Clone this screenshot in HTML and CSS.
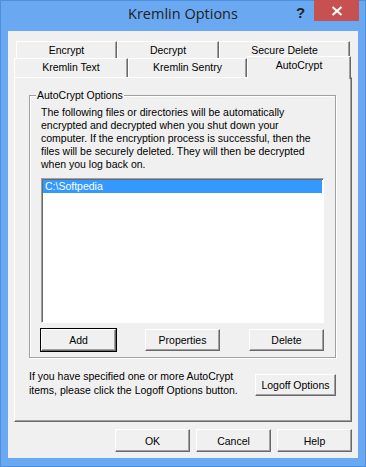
FILE: index.html
```html
<!DOCTYPE html>
<html lang="en">
<head>
    <meta charset="UTF-8">
    <title>Kremlin Options</title>
    <link rel="stylesheet" href="styles.css">
</head>
<body>
    <div class="window">
        <div class="titlebar">
            <span class="title">Kremlin Options</span>
            <span class="help-q">?</span>
            <span class="close-btn">
                <svg width="12" height="10" viewBox="0 0 12 10"><path d="M1.5 1 L10.5 9 M10.5 1 L1.5 9" stroke="#fff" stroke-width="2"/></svg>
            </span>
        </div>
        <div class="client">
            <div class="tabs">
                <div class="tab-row back">
                    <div class="tab w-encrypt">Encrypt</div>
                    <div class="tab w-decrypt">Decrypt</div>
                    <div class="tab w-secure">Secure Delete</div>
                </div>
                <div class="tab-row front">
                    <div class="tab w-ktext">Kremlin Text</div>
                    <div class="tab w-sentry">Kremlin Sentry</div>
                    <div class="tab w-auto active">AutoCrypt</div>
                </div>
            </div>
            <div class="panel">
                <fieldset class="group">
                    <legend>AutoCrypt Options</legend>
                    <p class="desc">The following files or directories will be automatically encrypted and decrypted when you shut down your computer. If the encryption process is successful, then the files will be securely deleted. They will then be decrypted when you log back on.</p>
                    <div class="listbox">
                        <div class="list-item selected">C:\Softpedia</div>
                    </div>
                    <div class="group-buttons">
                        <button class="btn default">Add</button>
                        <button class="btn">Properties</button>
                        <button class="btn">Delete</button>
                    </div>
                </fieldset>
                <div class="logoff-row">
                    <p class="logoff-text">If you have specified one or more AutoCrypt items, please click the Logoff Options button.</p>
                    <button class="btn logoff-btn">Logoff Options</button>
                </div>
            </div>
            <div class="dialog-buttons">
                <button class="btn">OK</button>
                <button class="btn">Cancel</button>
                <button class="btn">Help</button>
            </div>
        </div>
    </div>
</body>
</html>
```
FILE: styles.css
```css
:root {
    --frame-blue: #6aa9f1;
    --face: #f0f0f0;
    --shadow: #a0a0a0;
    --dark-shadow: #696969;
}
body {
    margin: 0;
    background-color: var(--frame-blue);
    font-family: "Liberation Sans", Arial, sans-serif;
    font-size: 10.5px;
    color: #000;
}
.window {
    width: 366px;
    height: 467px;
    box-sizing: border-box;
    border: 1px solid #4d8fdc;
    display: flex;
    flex-direction: column;
}
.titlebar {
    position: relative;
    height: 30px;
    flex-shrink: 0;
}
.title {
    position: absolute;
    left: 0;
    right: 0;
    top: 3px;
    text-align: center;
    font-family: "Open Sans", "Noto Sans", sans-serif;
    font-size: 14.5px;
    color: #222;
}
.help-q {
    position: absolute;
    left: 295px;
    top: 3px;
    font-family: "Liberation Sans", Arial, sans-serif;
    font-weight: bold;
    font-size: 15px;
    color: #222;
}
.close-btn {
    position: absolute;
    left: 313px;
    top: -1px;
    width: 45px;
    height: 21px;
    background-color: #c75050;
    display: flex;
    align-items: center;
    justify-content: center;
}
.client {
    margin: 0 7px 8px 7px;
    flex: 1;
    background-color: var(--face);
    padding: 10px 6px 0 6px;
    display: flex;
    flex-direction: column;
}
.tabs {
    display: flex;
    flex-direction: column;
    height: 36px;
}
.tab-row {
    display: flex;
}
.tab-row.back {
    height: 17px;
    padding-left: 2px;
}
.tab-row.front {
    height: 19px;
}
.tab {
    box-sizing: border-box;
    border-top: 1px solid #fff;
    border-left: 1px solid #fff;
    border-right: 1px solid var(--dark-shadow);
    box-shadow: inset -1px 0 var(--shadow);
    text-align: center;
    line-height: 16px;
    height: 100%;
}
.w-encrypt { width: 101px; }
.w-decrypt { width: 102px; }
.w-secure { width: 131px; }
.w-ktext { width: 114px; }
.w-sentry { width: 119px; }
.w-auto { width: 104px; }
.tab.active {
    height: 23px;
    margin-top: -2px;
    position: relative;
    z-index: 1;
    background-color: var(--face);
    line-height: 17px;
}
.panel {
    height: 345px;
    box-sizing: border-box;
    border-top: 1px solid #fff;
    border-left: 1px solid #fff;
    border-right: 1px solid var(--dark-shadow);
    border-bottom: 1px solid var(--dark-shadow);
    box-shadow: inset -1px -1px var(--shadow);
    padding: 17px 0 0 14px;
}
.group {
    margin: 0;
    width: 307px;
    height: 263px;
    box-sizing: border-box;
    border: 1px solid var(--shadow);
    box-shadow: 1px 1px 0 #fff, inset 1px 1px 0 #fff;
    padding: 4px 11px 0 11px;
    position: relative;
}
.group legend {
    position: absolute;
    top: -7px;
    left: 6px;
    padding: 0 1px;
    background-color: var(--face);
    line-height: 13px;
}
.desc {
    margin: 6px 0 0 0;
    line-height: 13px;
    height: 66px;
}
.listbox {
    margin-top: 6px;
    height: 145px;
    box-sizing: border-box;
    background-color: #fff;
    border: 1px solid;
    border-color: var(--shadow) #fff #fff var(--shadow);
    box-shadow: inset 1px 1px var(--dark-shadow);
    padding: 1px 1px 0 1px;
}
.list-item {
    height: 13px;
    line-height: 13px;
    padding-left: 2px;
}
.list-item.selected {
    background-color: #3399ff;
    color: #fff;
}
.group-buttons {
    display: flex;
    justify-content: space-between;
    margin-top: 6px;
}
.btn {
    width: 75px;
    height: 22px;
    box-sizing: border-box;
    background-color: var(--face);
    font-family: "Liberation Sans", Arial, sans-serif;
    font-size: 10.5px;
    color: #000;
    border: 1px solid;
    border-color: #fff var(--dark-shadow) var(--dark-shadow) #fff;
    box-shadow: inset -1px -1px var(--shadow);
    padding: 0;
}
.btn.default {
    outline: 1px solid #000;
}
.logoff-row {
    display: flex;
    align-items: center;
    justify-content: space-between;
    width: 307px;
    margin-top: 14px;
}
.logoff-text {
    margin: -3px 0 0 0;
    line-height: 14px;
    width: 220px;
}
.logoff-btn {
    width: 81px;
}
.dialog-buttons {
    display: flex;
    justify-content: flex-end;
    gap: 6px;
    padding-top: 7px;
}
.dialog-buttons .btn {
    height: 23px;
}
```
